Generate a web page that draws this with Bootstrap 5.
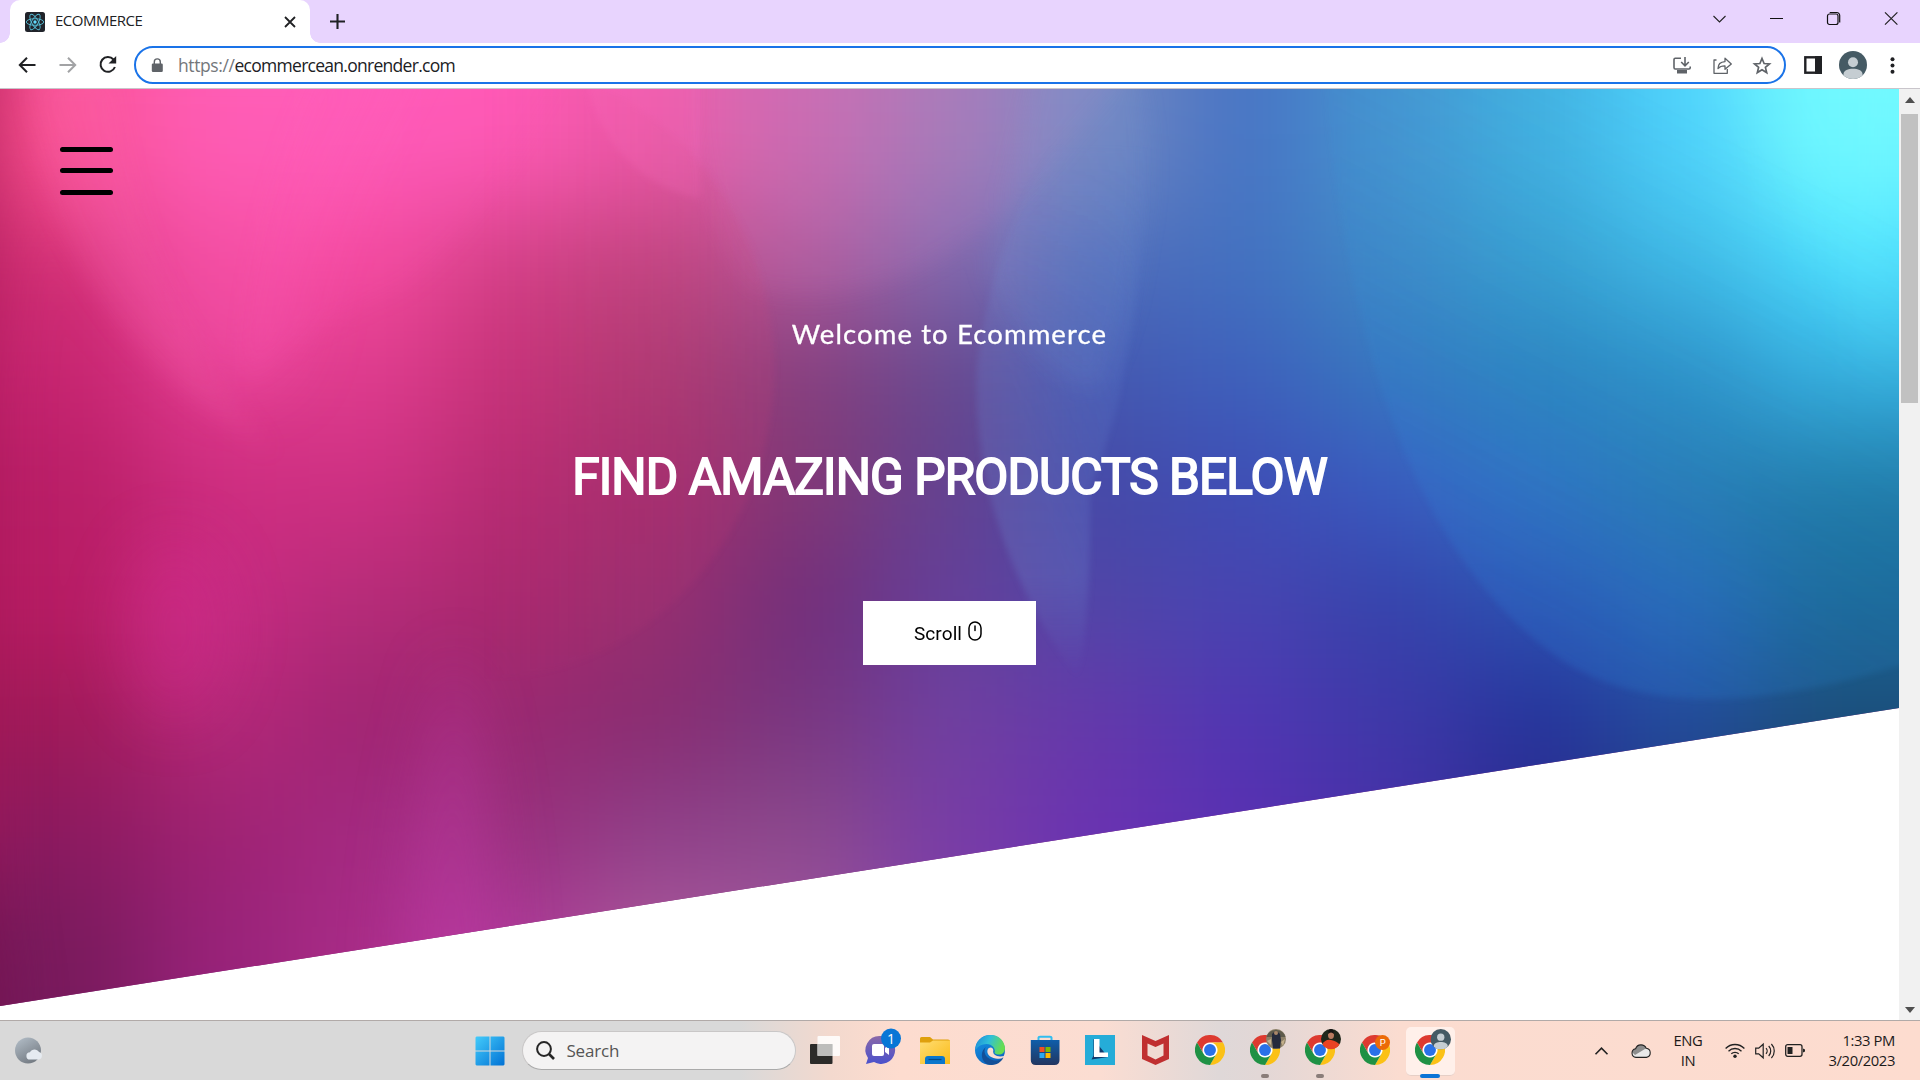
<!DOCTYPE html>
<html lang="en">
<head>
<meta charset="utf-8">
<title>ECOMMERCE</title>
<link href="https://cdn.jsdelivr.net/npm/bootstrap@5.3.0/dist/css/bootstrap.min.css" rel="stylesheet">
<style>
  body { width: 1920px; height: 1080px; overflow: hidden; font-family: "Open Sans", "Noto Sans", sans-serif; color: #202124; }
  svg { display: block; flex: none; overflow: visible; }
  .tabstrip { height: 43px; background: #e8d4fe; padding-left: 10px; }
  .browser-tab { width: 300px; background: #fff; border-radius: 10px 10px 0 0; padding: 0 15px; position: relative; }
  .browser-tab::before, .browser-tab::after { content: ""; position: absolute; bottom: 0; width: 10px; height: 10px; }
  .browser-tab::before { left: -10px; background: radial-gradient(circle at 0 0, transparent 9.5px, #fff 10px); }
  .browser-tab::after { right: -10px; background: radial-gradient(circle at 100% 0, transparent 9.5px, #fff 10px); }
  .tab-title { font-size: 15px; letter-spacing: -.5px; margin-left: 10px; margin-top: -3px; }
  .new-tab { margin-left: 20px; }
  .window-buttons { height: 37px; }
  .window-buttons > span { width: 57.2px; display: flex; justify-content: center; }
  .toolbar { height: 46px; border-bottom: 1px solid #c9c5cb; padding: 0 14px 1px 18px; }
  .address { width: 1652px; height: 38px; border: 2.5px solid #1a73e8; border-radius: 19px; padding: 0 13px 0 15px; margin-left: 15px; }
  .url { font-size: 17.5px; letter-spacing: -.72px; margin-left: 15px; line-height: 1; padding-top: 2px; }
  .url span { color: #74777b; letter-spacing: -.4px; }
  .viewport { height: 931px; }
  .landing { width: 1899px; }
  .banner { height: 917px; clip-path: polygon(0 0, 100% 0, 100% 619px, 0 100%); background: #8a3080; }
  .banner-art { position: absolute; inset: 0; }
  .menu-toggle { position: absolute; left: 60px; top: 58px; width: 53px; }
  .menu-toggle i { display: block; height: 5px; border-radius: 3px; background: #000; margin-bottom: 16.3px; }
  .banner-copy { position: relative; padding-top: 225px; color: #fff; }
  .welcome { font: 400 27.500px/40px Lato, sans-serif; letter-spacing: 1.1px; margin: 0; -webkit-text-stroke: .3px #fff; }
  .headline { font: 400 49.5px/60px Roboto, sans-serif; -webkit-text-stroke: 1.8px #fff; letter-spacing: -.88px; margin: 92.5px 0 0; }
  .scroll-btn { width: 173px; height: 64px; background: #fff; color: #000; border-radius: 0; font: 400 19px Roboto, sans-serif; letter-spacing: .1px; margin-top: 94.5px; gap: 6px; }
  .scroll-btn svg { margin: -5px 3px 0 0; }
  .scrollbar-rail { width: 21px; background: #f1f1f1; padding: 8px 2px 7px; }
  .scrollbar-thumb { width: 17px; height: 289px; background: #c1c1c1; margin-top: 11px; }
  .taskbar { height: 60px; border-top: 1px solid #b1aaa8; padding: 0 25px 0 15px;
    background: linear-gradient(90deg, #d9d9d9 0, #d9d9d9 740px, #f3d9ce 830px, #fddccf 900px, #fbddd2 1100px, #dfd8d8 1220px, #e2d7d6 1260px, #fbdcd0 1400px, #fddccf 1920px); }
  .start-button { margin-left: 430.500px; }
  .search-pill { width: 274px; height: 39px; border-radius: 20px; background: #f4f3f3; border: 1px solid #c9c7c7; border-bottom-color: #aaa; margin-left: 17px; padding-left: 13px; font-size: 17px; letter-spacing: -.2px; color: #555; }
  .task-slot { width: 55px; height: 58px; position: relative; display: flex; align-items: center; justify-content: center; }
  .task-open::after { content: ""; position: absolute; bottom: 2px; width: 8px; height: 4px; border-radius: 2px; background: #8a7d79; }
  .task-active::before { content: ""; position: absolute; left: 3px; top: 5px; width: 49px; height: 49px; border-radius: 5px; background: #fff0ea; border-bottom: 1px solid #e6cfc6; }
  .task-active::after { content: ""; position: absolute; bottom: 2px; width: 20px; height: 4px; border-radius: 2px; background: #0b74d6; }
  .task-slot svg { position: relative; top: -.5px; }
  .tray-text { font-size: 14.8px; line-height: 20px; letter-spacing: -.4px; color: #1c1a1a; margin-top: -2px; }
</style>
<script src="https://cdn.jsdelivr.net/npm/bootstrap@5.3.0/dist/js/bootstrap.bundle.min.js"></script>
</head>
<body class="d-flex flex-column bg-white">
<svg width="0" height="0" class="position-absolute">
  <defs>
    <symbol id="chrome" viewBox="0 0 48 48">
      <circle cx="24" cy="24" r="16" fill="#fff"/>
      <path fill="#dd3a30" d="M3.2 12A24 24 0 0 1 44.8 12H24A12 12 0 0 0 13.6 30Z"/>
      <path fill="#fbc116" d="M44.8 12A24 24 0 0 1 24 48L34.4 30A12 12 0 0 0 24 12Z"/>
      <path fill="#1f9144" d="M24 48A24 24 0 0 1 3.2 12L13.6 30A12 12 0 0 0 34.4 30Z"/>
      <circle cx="24" cy="24" r="9.5" fill="#2a71e8"/>
    </symbol>
    <symbol id="person" viewBox="0 0 28 28">
      <clipPath id="pc"><circle cx="14" cy="14" r="14"/></clipPath>
      <g clip-path="url(#pc)"><rect width="28" height="28" fill="#455a64"/><circle cx="14" cy="11.2" r="5" fill="#c5cdd2"/><path d="M4.5 28v-5c0-7 19-7 19 0v5z" fill="#c5cdd2"/></g>
    </symbol>
    <linearGradient id="winG" gradientUnits="userSpaceOnUse" x1="0" y1="0" x2="30" y2="30"><stop stop-color="#45cdfb"/><stop offset="1" stop-color="#0070d4"/></linearGradient>
    <linearGradient id="edgeG" x1="0" y1="0" x2="1" y2=".3"><stop stop-color="#1c86d8"/><stop offset=".5" stop-color="#2fbfd9"/><stop offset="1" stop-color="#66dd52"/></linearGradient>
    <linearGradient id="edgeB" x1="0" y1="0" x2=".5" y2="1"><stop stop-color="#1697e8"/><stop offset="1" stop-color="#0c66c0"/></linearGradient>
    <linearGradient id="foldG" x1="0" y1="0" x2="1" y2="1"><stop stop-color="#ffdd72"/><stop offset="1" stop-color="#fabb18"/></linearGradient>
    <linearGradient id="storeG" x1="0" y1="0" x2="0" y2="1"><stop stop-color="#0f5eaa"/><stop offset="1" stop-color="#223660"/></linearGradient>
    <linearGradient id="chatG" x1="0" y1="0" x2="0" y2="1"><stop stop-color="#8a68a8"/><stop offset="1" stop-color="#4a51cc"/></linearGradient>
    <linearGradient id="moonG" x1="0" y1="0" x2=".6" y2="1"><stop stop-color="#b5c0ca"/><stop offset="1" stop-color="#757c84"/></linearGradient>
  </defs>
</svg>

<header>
  <div class="tabstrip d-flex">
    <div class="browser-tab d-flex align-items-center">
      <svg width="20" height="20" viewBox="0 0 20 20"><rect width="20" height="20" rx="2.5" fill="#20232a"/><g fill="none" stroke="#56bfd8" stroke-width=".9"><ellipse cx="10" cy="10" rx="8.7" ry="3.3"/><ellipse cx="10" cy="10" rx="8.7" ry="3.3" transform="rotate(60 10 10)"/><ellipse cx="10" cy="10" rx="8.7" ry="3.3" transform="rotate(120 10 10)"/></g><circle cx="10" cy="10" r="1.7" fill="#61dafb"/></svg>
      <span class="tab-title">ECOMMERCE</span>
      <svg class="ms-auto" width="10" height="10" viewBox="0 0 10 10"><path d="M0 0l10 10M10 0L0 10" stroke="#202124" stroke-width="1.8"/></svg>
    </div>
    <svg class="align-self-center new-tab" width="15" height="15" viewBox="0 0 15 15"><path d="M7.5 0v15M0 7.5h15" stroke="#202124" stroke-width="2.1"/></svg>
    <div class="window-buttons d-flex ms-auto align-items-center">
      <span><svg width="13" height="8" viewBox="0 0 13 8"><path d="M.5 1l6 6 6-6" fill="none" stroke="#222" stroke-width="1.1"/></svg></span>
      <span><svg width="13" height="2" viewBox="0 0 13 2"><path d="M-1 .5h13" stroke="#111" stroke-width="1"/></svg></span>
      <span><svg width="13" height="13" viewBox="0 0 13 13"><g fill="none" stroke="#111" stroke-width="1.2"><rect x="-.5" y="2" width="10.5" height="10.5" rx="2"/><path d="M1.700.5h7a3 3 0 0 1 3 3v7"/></g></svg></span>
      <span><svg width="13" height="13" viewBox="0 0 13 13"><path d="M0 .3l12.4 12.4M12.400.3L0 12.700" stroke="#222" stroke-width="1.2"/></svg></span>
    </div>
  </div>
  <div class="toolbar d-flex align-items-center">
    <svg width="18" height="16" viewBox="0 0 18 16"><path d="M17.500 8H2M9 .8L1.800 8 9 15.200" fill="none" stroke="#202124" stroke-width="2"/></svg>
    <svg class="ms-4" width="18" height="16" viewBox="0 0 18 16"><path d="M-.5 8H15M8 .8L15.200 8 8 15.200" fill="none" stroke="#a2a3a5" stroke-width="2"/></svg>
    <svg width="19" height="18" viewBox="0 0 19 18" style="margin-left:22px"><path d="M13.500 3.500A7.400 7.400 0 1 0 14.900 11" fill="none" stroke="#202124" stroke-width="2"/><path d="M16.200 0v7.600H8.500z" fill="#202124"/></svg>
    <div class="address d-flex align-items-center">
      <svg width="12" height="14" viewBox="0 0 12 14"><rect x=".8" y="5.500" width="11" height="8.500" rx="1.200" fill="#5f6368"/><path d="M3.300 6V3.900a3 3 0 0 1 6 0V6" fill="none" stroke="#5f6368" stroke-width="1.400"/></svg>
      <div class="url"><span>https://</span>ecommercean.onrender.com</div>
      <div class="d-flex ms-auto align-items-center">
        <svg width="18" height="17" viewBox="0 0 18 17"><g fill="none" stroke="#5f6368" stroke-width="1.600"><path d="M8 1.200H2.200Q1 1.200 1 2.400V10.600Q1 12 2.200 12H16Q17.200 12 17.200 10.800V9.500"/><path d="M12 0v8.500M8.200 5l3.800 3.800L15.800 5"/></g><path d="M4 13h10v3.500H4z" fill="#5f6368"/></svg>
        <svg width="19" height="17" viewBox="0 0 19 17" style="margin-left:22px"><g fill="none" stroke="#5f6368" stroke-width="1.300" stroke-linejoin="round"><path d="M3.500 3H1v13.300h13.300V12"/><path d="M5 11.500Q5 5 12 4.600V1.200L18.300 7 12 12.300V8.900Q7.500 8.800 5 11.500z"/></g></svg>
        <svg width="18" height="17" viewBox="0 0 18 17" style="margin-left:21px"><path d="M9 1.500l2.100 5 5.400.4-4.100 3.500 1.300 5.200L9 12.800l-4.700 2.800 1.300-5.200L1.500 6.900l5.400-.4z" fill="none" stroke="#5f6368" stroke-width="1.700"/></svg>
      </div>
    </div>
    <svg width="18" height="18" viewBox="0 0 18 18" style="margin-left:18px"><rect x="1.300" y="1.300" width="15.400" height="15.400" fill="none" stroke="#202124" stroke-width="2.400"/><path d="M11 0h7v18h-7z" fill="#202124"/></svg>
    <svg width="28" height="28" style="margin-left:17px"><use href="#person"/></svg>
    <svg width="5" height="17" viewBox="0 0 5 17" style="margin-left:23px" fill="#202124"><circle cx="2.500" cy="2.200" r="2"/><circle cx="2.500" cy="8.500" r="2"/><circle cx="2.500" cy="14.800" r="2"/></svg>
  </div>
</header>

<main class="viewport d-flex">
  <div class="landing">
    <section class="banner position-relative">
      <svg class="banner-art" width="1899" height="917" viewBox="0 0 1899 917">
        <defs>
          <filter id="melt" x="-300" y="-300" width="2500" height="1520" filterUnits="userSpaceOnUse" color-interpolation-filters="sRGB"><feGaussianBlur stdDeviation="52"/></filter>
          <filter id="soft3" x="-200" y="-200" width="2400" height="1400" filterUnits="userSpaceOnUse" color-interpolation-filters="sRGB"><feGaussianBlur stdDeviation="3"/></filter>
          <filter id="soft12" x="-200" y="-200" width="2400" height="1400" filterUnits="userSpaceOnUse" color-interpolation-filters="sRGB"><feGaussianBlur stdDeviation="11"/></filter>
          <filter id="soft30" x="-300" y="-300" width="2500" height="1520" filterUnits="userSpaceOnUse" color-interpolation-filters="sRGB"><feGaussianBlur stdDeviation="30"/></filter>
          <linearGradient id="lens" gradientUnits="userSpaceOnUse" x1="0" y1="80" x2="0" y2="590"><stop stop-color="#7fa8e4" stop-opacity=".04"/><stop offset=".4" stop-color="#6c90dc" stop-opacity=".2"/><stop offset=".8" stop-color="#7090d4" stop-opacity=".24"/><stop offset="1" stop-color="#7090d8" stop-opacity="0"/></linearGradient>
          <linearGradient id="lensFade" gradientUnits="userSpaceOnUse" x1="980" y1="180" x2="1200" y2="120"><stop stop-color="#fff"/><stop offset=".55" stop-color="#999"/><stop offset="1" stop-color="#000"/></linearGradient>
          <mask id="lensMask" maskUnits="userSpaceOnUse" x="900" y="0" width="400" height="700"><rect x="900" width="400" height="700" fill="url(#lensFade)"/></mask>
          <linearGradient id="rose" x1="1" y1="0" x2="0" y2="0"><stop stop-color="#d04078" stop-opacity=".15"/><stop offset=".5" stop-color="#d04078" stop-opacity="0"/></linearGradient>
          <linearGradient id="aqua" x1="0" y1="1" x2=".5" y2="0"><stop stop-color="#2f80e0" stop-opacity=".25"/><stop offset="1" stop-color="#30b0e0" stop-opacity="0"/></linearGradient>
        </defs>
        <g id="wash" filter="url(#melt)"></g>
        <g filter="url(#soft30)">
          <path d="M-90-90H15L-10 300V1000H-90z" fill="#a01450" opacity=".6"/>
          <path d="M-90 700Q20 800 0 990H-90z" fill="#5c0e48" opacity=".5"/>
          <path d="M455 560Q400 740 400 930H500Q500 720 455 560" fill="#c840b0" opacity=".35"/>
          <ellipse cx="175" cy="540" rx="50" ry="90" fill="#dc3098" opacity=".28"/>
          <path d="M30-50Q50 180 210 290Q280 330 300 250Q320 100 420-50z" fill="#ff60b8" opacity=".3"/>
          <path d="M1899 0L1899 300L1720-60H1960z" fill="#70ffff" opacity=".25"/>
        </g>
        <g filter="url(#soft12)">
          <path d="M700-40Q690 120 750 200Q880 230 1010 120L1150-40z" fill="#ee90d0" opacity=".09"/>
          <path d="M1040-40Q1020 60 985 180Q1040 300 1100 300Q1130 240 1140 160Q1160 60 1130-40z" fill="#84a6dc" opacity=".13"/>
          <path d="M245 290Q250 120 330-40H570Q500 130 400 200Q320 230 245 290z" fill="#ff55b8" opacity=".12"/>
          <path d="M30-10Q50 240 275 365Q140 220 110-10z" fill="#ff70b8" opacity=".12"/>
        </g>
        <g filter="url(#soft3)">
          <path mask="url(#lensMask)" d="M1052 60Q990 160 977 279Q970 440 1078 590Q1092 520 1090 400Q1140 280 1150 60z" fill="url(#lens)"/>
          <ellipse cx="480" cy="280" rx="294" ry="310" fill="url(#rose)"/>
          <path d="M1325-10Q1360 430 1560 570Q1680 650 1920 570V-10z" fill="url(#aqua)"/>
          <path d="M585-10Q610 90 700 110V-10z" fill="#ff74c4" opacity=".16"/>
        </g>
      </svg>
      <div class="menu-toggle"><i></i><i></i><i></i></div>
      <div class="banner-copy d-flex flex-column align-items-center">
        <p class="welcome">Welcome to Ecommerce</p>
        <h1 class="headline">FIND AMAZING PRODUCTS BELOW</h1>
        <button class="scroll-btn btn d-flex align-items-center justify-content-center p-0">Scroll
          <svg width="14" height="20" viewBox="0 0 14 20"><rect x="1" y="1" width="12" height="18" rx="6" fill="none" stroke="#000" stroke-width="1.500"/><path d="M7 5v4.500" stroke="#000" stroke-width="1.500" stroke-linecap="round"/></svg>
        </button>
      </div>
    </section>
  </div>
  <aside class="scrollbar-rail d-flex flex-column align-items-center">
    <svg width="10" height="6" viewBox="0 0 10 6"><path d="M5 0l5 6H0z" fill="#505050"/></svg>
    <div class="scrollbar-thumb"></div>
    <svg class="mt-auto" width="10" height="6" viewBox="0 0 10 6"><path d="M5 6l5-6H0z" fill="#505050"/></svg>
  </aside>
</main>

<footer class="taskbar d-flex align-items-center">
  <svg width="29" height="27" viewBox="0 0 29 27"><circle cx="13" cy="13.500" r="13" fill="url(#moonG)"/><path d="M15 22.500a3.600 3.600 0 0 1 0-7.200 5.200 5.200 0 0 1 9-.2 3.800 3.800 0 0 1 0 7.400z" fill="#e6ebf1"/></svg>
  <svg class="start-button" width="30" height="30" viewBox="0 0 30 30"><path d="M1.500.5H14.500V14.500H.5V1.500zM15.500.5H28.500l1 1V14.500h-14zM.5 15.500h14v14H1.500l-1-1zM15.500 15.500h14v13l-1 1h-13z" fill="url(#winG)"/></svg>
  <div class="search-pill d-flex align-items-center">
    <svg width="19" height="19" viewBox="0 0 19 19"><circle cx="8" cy="8" r="6.900" fill="none" stroke="#262626" stroke-width="2"/><path d="M13 13l5 5" stroke="#262626" stroke-width="2.600"/></svg>
    <span style="margin-left:12px">Search</span>
  </div>
  <div class="d-flex" style="margin-left:2px">
    <div class="task-slot"><svg width="30" height="28" viewBox="0 0 30 28"><rect x="0" y="8" width="22.500" height="20" rx="1" fill="#2b2b29"/><rect x="7.500" y="0" width="22.500" height="20" rx="1" fill="#fff" fill-opacity=".86"/><path d="M7.500 8h15v12h-15z" fill="#bdbdbb"/></svg></div>
    <div class="task-slot"><svg width="30" height="30" viewBox="0 0 30 30"><path d="M15 1a14 14 0 1 1-6 26L1 29l2-6A14 14 0 0 1 15 1z" fill="url(#chatG)"/><rect x="7" y="9" width="12" height="12" rx="2" fill="#fff"/><path d="M20 13l4-3v10l-4-3z" fill="#fff"/><circle cx="26" cy="3.500" r="10" fill="#0876d6"/><text x="26" y="8.500" font-size="14" fill="#fff" text-anchor="middle">1</text></svg></div>
    <div class="task-slot"><svg width="30" height="27" viewBox="0 0 30 27"><path d="M0 1.500Q0 0 1.500 0H10l3 2.500h15Q30 2.500 30 4v6H0z" fill="#dfa00c"/><path d="M0 5.500h10l3-2h17V27H0z" fill="url(#foldG)"/><path d="M5 27v-5q0-3 3-3h14q3 0 3 3v5z" fill="#0b77cc"/><path d="M8.500 22.500h13" stroke="#064a86" stroke-width="1.200"/></svg></div>
    <div class="task-slot"><svg width="30" height="30" viewBox="0 0 30 30"><circle cx="15" cy="15" r="15" fill="url(#edgeB)"/><path d="M1 11C4-3 28-5 30 13C30 20 23 21 19.500 18C21 13.500 17 9 11.500 9C6.500 9 3 11 .3 15z" fill="url(#edgeG)"/><path d="M11 12C6.500 18 13 26 22 25.500Q26 25 28.500 22.500C25 30 16 31.500 11 28.500C5 24 6 15 11 12z" fill="#124f98"/><path d="M12.500 15C14 11.500 18 12 18.300 15C17.500 18 19 20 22 21Q26 22 30 20.500L28 22.500Q26 24.500 20.500 23.500C15 22.500 11.500 19 12.500 15z" fill="#fbddd2"/></svg></div>
    <div class="task-slot"><svg width="30" height="30" viewBox="0 0 30 30"><path d="M8.500 6V2.500Q8.500 1.800 10 1.800H20Q21.500 1.800 21.500 2.500V6" fill="none" stroke="#32bdf0" stroke-width="2"/><path d="M.8 5h28.700V25q0 5-5 5H5.800q-5 0-5-5z" fill="url(#storeG)"/><path d="M9.500 12h5v5h-5z" fill="#f25022"/><path d="M15.500 12h5v5h-5z" fill="#7fba00"/><path d="M9.500 18h5v5h-5z" fill="#28a8f0"/><path d="M15.500 18h5v5h-5z" fill="#ffb900"/></svg></div>
    <div class="task-slot"><svg width="30" height="30" viewBox="0 0 30 30"><path d="M0 0h30v30H0z" fill="#25acd8"/><path d="M8.500 4v16.500L6.500 24.500 23 22z" fill="#123a6c"/><path d="M9 4h5.500v13.500H23V22H9z" fill="#fff"/></svg></div>
    <div class="task-slot"><svg width="27" height="30" viewBox="0 0 27 30"><path d="M0 0l13.500 6L27 0v24l-13.500 6L0 24z" fill="#c02f30"/><path d="M5.500 8.500l8 3.500 8-3.500v12l-8 4-8-4z" fill="#f0dbd3"/></svg></div>
    <div class="task-slot"><svg width="30" height="30"><use href="#chrome"/></svg></div>
    <div class="task-slot task-open"><svg width="30" height="30"><use href="#chrome"/><g><circle cx="26" cy="4" r="10" fill="#8d8068"/><path d="M16.500 2a10 10 0 0 1 19 0z" fill="#5d5a4c"/><path d="M22-1q4-5 8 0l1 6-1 8.500h-7l-1-8z" fill="#252a3c"/><circle cx="26" cy="-2" r="2" fill="#a98668"/><path d="M17 6l4-2v6zM31 7l4-3-2 7z" fill="#c4b08b"/></g></svg></div>
    <div class="task-slot task-open"><svg width="30" height="30"><use href="#chrome"/><circle cx="26" cy="4" r="10" fill="#20271c"/><path d="M17.500 9.500Q20 4 26 5t8.500 4.500A10 10 0 0 1 17.500 9.500z" fill="#e94224"/><ellipse cx="26" cy="0" rx="3" ry="4" fill="#b97b60"/><path d="M23-1q0-5 3-5t3 5q-3-3-6 0" fill="#151413"/></svg></div>
    <div class="task-slot"><svg width="30" height="30"><use href="#chrome"/><circle cx="22.500" cy="7.500" r="7.500" fill="#ec6a07"/><text x="22.700" y="11" font-size="9.500" font-family="Roboto" fill="#fff" text-anchor="middle">P</text></svg></div>
    <div class="task-slot task-active"><svg width="30" height="30"><use href="#chrome"/><use href="#person" x="15.500" y="-6" width="20.500" height="20.500"/></svg></div>
  </div>
  <div class="d-flex align-items-center ms-auto">
    <svg width="13" height="8" viewBox="0 0 13 8"><path d="M.5 7.200l6-6 6 6" fill="none" stroke="#222" stroke-width="1.600"/></svg>
    <svg width="20" height="14" viewBox="0 0 20 14" style="margin-left:23px"><path d="M5 13.400a4.400 4.400 0 0 1-.4-8.700 5.700 5.700 0 0 1 10.600-.4 4.600 4.600 0 0 1 .2 9.100z" fill="#e9e9e9"/><path d="M1 8a4 4 0 0 1 3.600-3.300 5.700 5.700 0 0 1 10.600-.4L4 11z" fill="#8d8d8d"/><path d="M5 13.400a4.400 4.400 0 0 1-.4-8.700 5.700 5.700 0 0 1 10.600-.4 4.600 4.600 0 0 1 .2 9.100z" fill="none" stroke="#222" stroke-width="1.100"/></svg>
    <div class="tray-text text-center" style="margin-left:22px;width:30px">ENG<br>IN</div>
    <svg width="20" height="15" viewBox="0 0 20 15" style="margin-left:22px"><g fill="none" stroke="#222" stroke-width="1.300"><path d="M.6 5.500a13 13 0 0 1 18.800 0M3.500 8.200a9.200 9.200 0 0 1 13 0M6.300 10.800a5.300 5.300 0 0 1 7.400 0"/></g><circle cx="10" cy="13.200" r="1.700" fill="#222"/></svg>
    <svg width="20" height="16" viewBox="0 0 20 16" style="margin-left:10px"><g fill="none" stroke="#222" stroke-width="1.200"><path d="M.7 5.200h3l4.500-4v13.600l-4.500-4h-3z"/><path d="M11 5.200a4 4 0 0 1 0 5.600M13.700 3a7.200 7.200 0 0 1 0 10M16.400 1a10 10 0 0 1 0 14"/></g></svg>
    <svg width="20" height="13" viewBox="0 0 20 13" style="margin-left:10px"><rect x=".7" y=".7" width="16.300" height="11.600" rx="2" fill="none" stroke="#222" stroke-width="1.300"/><path d="M2.500 3h5v7h-5zM18 4.500l2 1v2l-2 1z" fill="#222"/></svg>
    <div class="tray-text text-end text-nowrap" style="margin-left:21px;width:69px">1:33 PM<br>3/20/2023</div>
  </div>
</footer>
<script>
  // Colour wash of the banner: one swatch per cell, melted together by the blur filter.
  const rows = [
    "f84f8c ff5cb4 ff5dba ff5bb6 ee5aaa c86ab0 a37ab8 7589c2 4874c4 4694d0 42b0e0 4ed2fc 72f8ff",
    "d02f74 f0479a f44a9e d24086 c04580 ae5a9c 846aae 506cba 4371c0 3f88c6 399fd0 40bae6 4cdcff",
    "c62470 e23c90 de3c8e c63278 ac3a72 843f7e 68488e 4458b0 3e60bc 3676be 2c82bc 2d8fc6 37b0e0",
    "b81e66 cc2c7e ce3082 b62c72 a42c6e 823876 644290 4549a8 3e4cb4 3a5ac0 3070c0 2879b0 2078a4",
    "b81c64 c82a82 b42c78 aa286e 963070 722e7a 643f9a 5046a8 4844b0 3642aa 2c50b0 2866b6 1a6694",
    "a01a58 b42878 a02472 982870 882c70 783680 7040a0 6438aa 5036b2 3e38a8 26329a 234a9c 1c4e7c",
    "8c1a60 9e2272 a42a82 98307c 8f408a 8c4a8c 783ca6 6a32b2 5a30b2 4830a8 2c2c90 204080 1a4068",
    "781a5c 98227a aa2c88 ae389a ac5a9a a054a0 8040a8 6a32b2 5a30b2 4830a8 2c2c90 204080 1a4068"
  ].map(r => r.split(" "));
  const wash = document.getElementById("wash"), cw = 146.1, ch = 114.7;
  rows.forEach((r, j) => r.forEach((c, i) => {
    const cell = document.createElementNS("http://www.w3.org/2000/svg", "rect");
    const l = i ? 0 : 200, t = j ? 0 : 200, e = i === 12 ? 200 : 1, b = j === 7 ? 200 : 1;
    cell.setAttribute("x", i * cw - l); cell.setAttribute("y", j * ch - t);
    cell.setAttribute("width", cw + l + e); cell.setAttribute("height", ch + t + b);
    cell.setAttribute("fill", "#" + c);
    wash.appendChild(cell);
  }));
</script>
</body>
</html>
